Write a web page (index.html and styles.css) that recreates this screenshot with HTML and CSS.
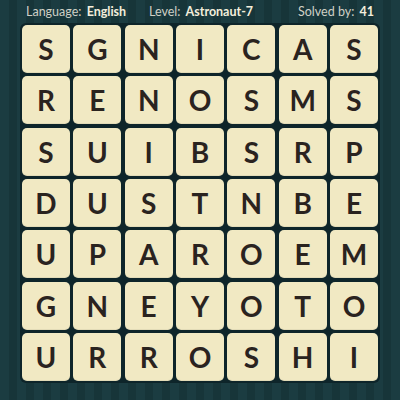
FILE: index.html
```html
<!DOCTYPE html>
<html>
<head>
<meta charset="utf-8">
<link rel="stylesheet" href="styles.css">
</head>
<body>
<div class="page">
  <div class="header">
    <span class="item lang">Language: <b>English</b></span>
    <span class="item level">Level: <b>Astronaut-7</b></span>
    <span class="item solved">Solved by: <b>41</b></span>
  </div>
  <div class="board">
    <div class="tile">S</div><div class="tile">G</div><div class="tile">N</div><div class="tile">I</div><div class="tile">C</div><div class="tile">A</div><div class="tile">S</div>
    <div class="tile">R</div><div class="tile">E</div><div class="tile">N</div><div class="tile">O</div><div class="tile">S</div><div class="tile">M</div><div class="tile">S</div>
    <div class="tile">S</div><div class="tile">U</div><div class="tile">I</div><div class="tile">B</div><div class="tile">S</div><div class="tile">R</div><div class="tile">P</div>
    <div class="tile">D</div><div class="tile">U</div><div class="tile">S</div><div class="tile">T</div><div class="tile">N</div><div class="tile">B</div><div class="tile">E</div>
    <div class="tile">U</div><div class="tile">P</div><div class="tile">A</div><div class="tile">R</div><div class="tile">O</div><div class="tile">E</div><div class="tile">M</div>
    <div class="tile">G</div><div class="tile">N</div><div class="tile">E</div><div class="tile">Y</div><div class="tile">O</div><div class="tile">T</div><div class="tile">O</div>
    <div class="tile">U</div><div class="tile">R</div><div class="tile">R</div><div class="tile">O</div><div class="tile">S</div><div class="tile">H</div><div class="tile">I</div>
  </div>
</div>
</body>
</html>
```
FILE: styles.css
```css
html, body {
  margin: 0;
  padding: 0;
}
body {
  width: 400px;
  height: 400px;
  overflow: hidden;
  background-color: #1a3a3f;
  background-image: repeating-linear-gradient(90deg, #1b3c41 0px, #1b3c41 9px, #173539 9px, #173539 17px);
  font-family: Lato, "Open Sans", sans-serif;
}
.page {
  display: flex;
  flex-direction: column;
  align-items: center;
}
.header {
  box-sizing: border-box;
  width: 360px;
  height: 23px;
  padding: 0 6px 0 6px;
  display: flex;
  align-items: center;
  color: #cfd0c6;
  font-size: 12.5px;
  white-space: nowrap;
}
.lang {
  width: 123px;
  flex: none;
}
.solved {
  margin-left: auto;
}
.header b {
  color: #f3eedc;
  font-weight: 700;
  margin-left: 2px;
}
.board {
  display: grid;
  grid-template-columns: repeat(7, 48px);
  grid-auto-rows: 48px;
  gap: 3.33px;
  padding: 2px;
  background: #0e252a;
  border-radius: 6px;
}
.tile {
  background: #f1e9c3;
  border-radius: 5px;
  display: flex;
  align-items: center;
  justify-content: center;
  color: #2a231f;
  font-weight: 700;
  font-size: 28px;
  line-height: 1;
  box-shadow: inset 0 -1px 0 rgba(0,0,0,0.06);
}
```
